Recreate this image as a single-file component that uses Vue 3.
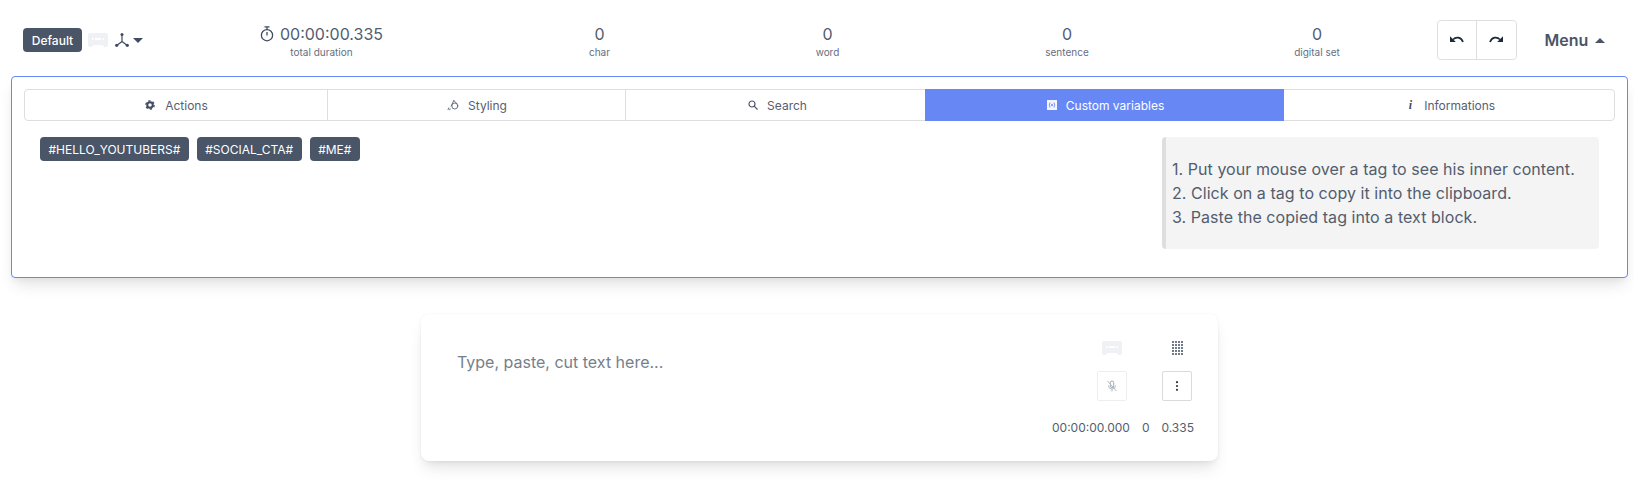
<script setup>
const stats = [
  { value: '0', label: 'char' },
  { value: '0', label: 'word' },
  { value: '0', label: 'sentence' },
  { value: '0', label: 'digital set' },
]
const tags = ['#HELLO_YOUTUBERS#', '#SOCIAL_CTA#', '#ME#']
</script>

<template>
  <div class="page">
    <header class="topbar">
      <div class="left">
        <span class="badge">Default</span>
        <svg class="pause" width="20" height="14" viewBox="0 0 20 14"><path d="M2 0h16a2 2 0 0 1 2 2v10a2 2 0 0 1-2 2h-2l-1-2H5l-1 2H2a2 2 0 0 1-2-2V2a2 2 0 0 1 2-2z" fill="#eff1f4"/><path d="M4 6h1.500M7 6h6M14.500 6H16" stroke="#fff" stroke-width="2"/></svg>
        <svg class="branch" width="14" height="14" viewBox="0 0 14 14"><path d="M7 2v6.500M7 8.500l-5 3.800M7 8.500l5 3.800" fill="none" stroke="#3f4c60" stroke-width="1.200"/><circle cx="7" cy="1.600" r="1.500" fill="#3f4c60"/><circle cx="1.700" cy="12.300" r="1.600" fill="#3f4c60"/><circle cx="12.300" cy="12.300" r="1.600" fill="#3f4c60"/></svg>
        <span class="caret down"></span>
      </div>
      <div class="stats">
        <div class="stat">
          <div class="value">
            <svg width="14" height="16" viewBox="0 0 14 16"><circle cx="7" cy="9.200" r="5.600" fill="none" stroke="#3f4c60" stroke-width="1.300"/><path d="M4.500 .8h5M7 1v2.500M7 6v3.500" stroke="#3f4c60" stroke-width="1.300" fill="none"/></svg>
            <span>00:00:00.335</span>
          </div>
          <div class="label">total duration</div>
        </div>
        <div v-for="s in stats" :key="s.label" class="stat">
          <div class="value">{{ s.value }}</div>
          <div class="label">{{ s.label }}</div>
        </div>
      </div>
      <div class="history">
        <button class="hbtn">
          <svg width="14" height="10" viewBox="0 0 14 10"><path d="M3 4.500C6 1.500 11 1.800 13 7" fill="none" stroke="#1e2a3c" stroke-width="1.700"/><path d="M0 1.200V7h5.800z" fill="#1e2a3c"/></svg>
        </button>
        <button class="hbtn">
          <svg width="14" height="10" viewBox="0 0 14 10"><path d="M11 4.500C8 1.500 3 1.800 1 7" fill="none" stroke="#1e2a3c" stroke-width="1.700"/><path d="M14 1.200V7H8.200z" fill="#1e2a3c"/></svg>
        </button>
      </div>
      <div class="menu">Menu <span class="caret up"></span></div>
    </header>

    <div class="wrap">
      <section class="panel">
        <nav class="tabs">
          <div class="tab t1">
            <svg width="10" height="10" viewBox="0 0 12 12"><circle cx="6" cy="6" r="3.300" fill="none" stroke="#3f4c60" stroke-width="2.400"/><circle cx="6" cy="6" r="5" fill="none" stroke="#3f4c60" stroke-width="1.600" stroke-dasharray="2.600 2.640"/></svg>
            <span>Actions</span>
          </div>
          <div class="tab t2">
            <svg width="12" height="12" viewBox="0 0 12 12" fill="none" stroke="#5a6576" stroke-width=".9" stroke-linecap="round"><circle cx="7.800" cy="7" r="3"/><path d="M6.800 1.500L4.200 7M6.800 1.500l3.400 3.500M1.600 9l-.5 1.600M3 9.800l-.2 1"/></svg>
            <span>Styling</span>
          </div>
          <div class="tab t3">
            <svg width="10" height="10" viewBox="0 0 10 10" fill="none" stroke="#4a5568" stroke-width="1.200"><circle cx="4" cy="4" r="3"/><path d="M6.200 6.200L9.500 9.500"/></svg>
            <span>Search</span>
          </div>
          <div class="tab t4 active">
            <svg width="10" height="10" viewBox="0 0 10 10"><rect width="10" height="10" fill="#f2f4fe"/><path d="M3 2.500Q1.500 5 3 7.500M7 2.500Q8.500 5 7 7.500M4 3.800l2 2.400M6 3.800l-2 2.400" fill="none" stroke="#6787f5" stroke-width=".8"/></svg>
            <span>Custom variables</span>
          </div>
          <div class="tab t5">
            <i class="info">i</i>
            <span>Informations</span>
          </div>
        </nav>
        <div class="body">
          <div class="tags">
            <span v-for="t in tags" :key="t" class="tag">{{ t }}</span>
          </div>
          <div class="notice">
            <div>1. Put your mouse over a tag to see his inner content.</div>
            <div>2. Click on a tag to copy it into the clipboard.</div>
            <div>3. Paste the copied tag into a text block.</div>
          </div>
        </div>
      </section>

      <section class="card">
        <div class="card-main">
          <div class="placeholder">Type, paste, cut text here...</div>
          <div class="controls">
            <div class="cell">
              <svg width="20" height="14" viewBox="0 0 20 14"><path d="M2 0h16a2 2 0 0 1 2 2v10a2 2 0 0 1-2 2h-2l-1-2H5l-1 2H2a2 2 0 0 1-2-2V2a2 2 0 0 1 2-2z" fill="#eff1f4"/><path d="M4 6h1.500M7 6h6M14.500 6H16" stroke="#fff" stroke-width="2"/></svg>
            </div>
            <div class="cell">
              <svg width="11" height="14" viewBox="0 0 11 14" fill="#3f4c60">
                <template v-for="y in [0,3,6,9,12]" :key="y">
                  <circle v-for="x in [1,4,7,10]" :key="x" :cx="x" :cy="y + 1" r="1" />
                </template>
              </svg>
            </div>
            <button class="sq muted">
              <svg width="12" height="12" viewBox="0 0 12 12" fill="none" stroke="#b4bac4" stroke-width="1"><rect x="4.300" y="1" width="3.400" height="6.500" rx="1.700" stroke="#a0a8b4"/><path d="M2.500 5.500a3.500 3.500 0 0 0 7 0M6 9v2.500M1.500 1l9 10"/></svg>
            </button>
            <button class="sq">
              <svg width="4" height="10" viewBox="0 0 4 10" fill="#2d3748"><circle cx="2" cy="1.200" r="1.100"/><circle cx="2" cy="5" r="1.100"/><circle cx="2" cy="8.800" r="1.100"/></svg>
            </button>
          </div>
        </div>
        <div class="meta">
          <span>00:00:00.000</span><span>0</span><span>0.335</span>
        </div>
      </section>
    </div>
  </div>
</template>

<style>
html, body { margin: 0; background: #fff; }
</style>

<style scoped>
.page {
  font-family: Inter, "Liberation Sans", sans-serif;
  color: #4a5568;
  width: 1634px;
  height: 482px;
  overflow: hidden;
}
.topbar {
  display: flex;
  align-items: center;
  height: 76px;
  padding-top: 4px;
  box-sizing: border-box;
}
.left {
  width: 162.500px;
  box-sizing: border-box;
  padding-left: 23px;
  display: flex;
  align-items: center;
  flex: none;
}
.badge {
  background: #4a5568;
  color: #fff;
  font-size: 12px;
  font-weight: 500;
  border-radius: 4px;
  height: 24px;
  width: 59px;
  display: flex;
  align-items: center;
  justify-content: center;
}
.pause { margin-left: 6px; }
.branch { margin-left: 7px; }
.caret {
  display: inline-block;
  width: 0;
  height: 0;
  border-left: 5px solid transparent;
  border-right: 5px solid transparent;
}
.caret.down { border-top: 5px solid #3f4c60; margin-left: 4px; }
.caret.up { border-bottom: 5px solid #4a5568; margin-left: 3px; vertical-align: 3px; }
.stats {
  display: grid;
  grid-template-columns: 318px 238px 218px 261px 239px;
  flex: none;
  margin-top: 1px;
}
.stat { text-align: center; }
.value {
  font-size: 16px;
  line-height: 22px;
  display: flex;
  justify-content: center;
  align-items: center;
  gap: 6px;
  color: #525d6e;
}
.label { font-size: 10px; line-height: 14px; color: #646f7f; }
.history {
  display: flex;
  width: 80px;
  height: 40px;
  border: 1px solid #dedede;
  border-radius: 4px;
  box-sizing: border-box;
  flex: none;
}
.hbtn {
  flex: 1;
  background: #fff;
  border: 0;
  padding: 0;
  border-radius: 4px;
  display: flex;
  align-items: center;
  justify-content: center;
}
.hbtn + .hbtn { border-left: 1px solid #dedede; border-radius: 0 4px 4px 0; }
.menu {
  margin-left: 28px;
  font-size: 16px;
  font-weight: 600;
  color: #4a5568;
}
.wrap { margin: 0 6px 0 11px; }
.panel {
  border: 1px solid #6787f5;
  border-radius: 4px;
  padding: 12px;
  height: 202px;
  box-sizing: border-box;
  background: #fff;
  box-shadow: 0 10px 15px -3px rgba(0,0,0,.1), 0 4px 6px -2px rgba(0,0,0,.05);
}
.tabs {
  display: flex;
  height: 32px;
  box-sizing: border-box;
  border: 1px solid #dedede;
  border-radius: 4px;
}
.tab {
  display: flex;
  align-items: center;
  justify-content: center;
  gap: 10px;
  font-size: 12px;
  color: #566072;
  box-sizing: border-box;
  border-right: 1px solid #dedede;
}
.t1 { width: 303px; padding-left: 1px; }
.t2 { width: 298px; padding-left: 1px; gap: 9px; }
.t3 { width: 299px; padding-left: 4px; gap: 9px; border-right: 0; }
.t4 { width: 359px; }
.t5 { flex: 1; border-right: 0; gap: 12px; padding-left: 6px; }
.tab.active {
  background: #6787f5;
  color: #fff;
  border-right: 0;
  margin: -1px 0;
  height: 32px;
  gap: 9px;
  padding-left: 2px;
}
.info { font-family: "Liberation Serif", serif; font-style: italic; font-weight: 700; font-size: 12px; color: #3f4c60; }
.body {
  display: flex;
  justify-content: space-between;
  padding: 16px 16px 0;
}
.tags { display: flex; gap: 8px; align-items: flex-start; }
.tag {
  background: #4a5568;
  color: #fff;
  font-size: 12px;
  font-weight: 400;
  height: 24px;
  display: flex;
  align-items: center;
  padding: 0 8.500px;
  border-radius: 4px;
}
.notice {
  width: 437px;
  height: 112px;
  box-sizing: border-box;
  background: #f4f4f4;
  border-left: 4px solid #dedede;
  border-radius: 4px;
  padding: 20px 6px;
  font-size: 16px;
  line-height: 24px;
  letter-spacing: .05px;
  color: #525d6e;
  white-space: nowrap;
}
.card {
  width: 797px;
  height: 147px;
  margin: 36px auto 0;
  box-sizing: border-box;
  background: #fff;
  border-radius: 8px;
  box-shadow: 0 0 3px rgba(0,0,0,.05), 0 10px 15px -3px rgba(0,0,0,.1), 0 4px 6px -2px rgba(0,0,0,.05);
  padding: 24px 26px 24px 36px;
}
.card-main { display: flex; justify-content: space-between; }
.placeholder { font-size: 16px; line-height: 24px; color: #767f8c; margin-top: 12px; }
.controls {
  display: grid;
  grid-template-columns: 30px 30px;
  grid-template-rows: 20px 30px;
  column-gap: 35px;
  row-gap: 13px;
}
.cell { display: flex; align-items: center; justify-content: center; }
.sq {
  width: 30px;
  height: 30px;
  padding: 0;
  background: #fff;
  border: 1px solid #dadada;
  border-radius: 2px;
  display: flex;
  align-items: center;
  justify-content: center;
}
.sq.muted { border-color: #eeeeee; }
.meta {
  display: flex;
  justify-content: flex-end;
  gap: 12px;
  margin-top: 18px;
  margin-right: -2px;
  font-size: 12px;
  line-height: 18px;
  color: #525d6e;
}
</style>
